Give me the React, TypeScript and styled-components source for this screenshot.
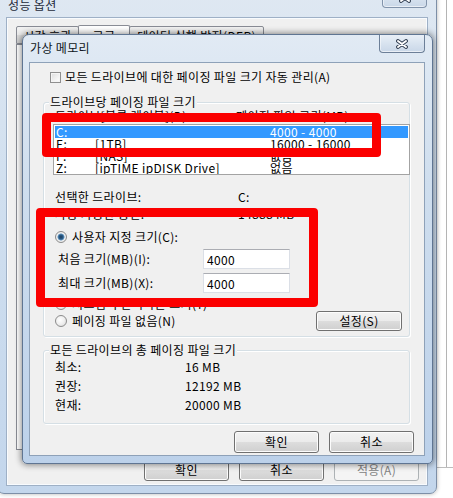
import React from "react";
import styled, { createGlobalStyle } from "styled-components";

const GlobalStyle = createGlobalStyle`
  html, body { margin: 0; padding: 0; background: #ffffff; overflow: hidden; }
  * { box-sizing: border-box; }
`;

const Desktop = styled.div`
  position: relative;
  width: 453px;
  height: 498px;
  overflow: hidden;
  background: #ffffff;
  font-family: "Noto Sans CJK KR", "Noto Sans", sans-serif;
  font-size: 12px;
  line-height: 14px;
  letter-spacing: 0.35px;
  color: #000;
`;

const BackdropV = styled.div`
  position: absolute;
  left: 446px;
  top: 0;
  width: 1px;
  height: 467px;
  background: #b4b4b4;
`;

const BackdropH = styled.div`
  position: absolute;
  left: 430px;
  top: 467px;
  width: 23px;
  height: 1px;
  background: #bdbdbd;
`;

/* ---------- window chrome ---------- */

const OuterWindow = styled.div`
  position: absolute;
  z-index: 0;
  left: -3px;
  top: -12px;
  width: 440px;
  height: 506px;
  display: flex;
  flex-direction: column;
  padding: 0 9px 8px 9px;
  border: 1px solid #7d8fa7;
  border-radius: 7px;
  background: linear-gradient(to bottom, #dfe8f2 0%, #d0dfef 40%, #c3d6ec 100%);
  box-shadow: 0 0 4px rgba(0, 0, 0, 0.3);
`;

const OuterTitleBar = styled.div`
  height: 29px;
  display: flex;
  justify-content: space-between;
  align-items: flex-start;
`;

const OuterTitle = styled.div`
  padding-top: 9px;
  padding-left: 1px;
  color: #1e2a3a;
`;

const CloseButton = styled.div<{ $w: number; $h: number; $faded?: boolean }>`
  width: ${(p) => p.$w}px;
  height: ${(p) => p.$h}px;
  display: flex;
  align-items: center;
  justify-content: center;
  border: 1px solid ${(p) => (p.$faded ? "#8193ab" : "#6c7f98")};
  border-top: none;
  border-radius: 0 0 4px 4px;
  background: linear-gradient(to bottom, #e9eff7 0%, #d8e3ef 50%, #c9d7e8 100%);
  box-shadow: inset 0 -1px 0 rgba(255, 255, 255, 0.6), inset 1px 0 0 rgba(255, 255, 255, 0.5);
`;

const CloseGlyph = () => (
  <svg width="12" height="10" viewBox="0 0 12 10">
    <path d="M2 2 L10 8 M10 2 L2 8" stroke="#2f3c50" strokeWidth="3.8" strokeLinecap="round" fill="none" />
    <path d="M2 2 L10 8 M10 2 L2 8" stroke="#ffffff" strokeWidth="2" strokeLinecap="round" fill="none" />
  </svg>
);

const OuterClient = styled.div`
  flex: 1;
  display: flex;
  flex-direction: column;
  padding: 5px 7px 3px 8px;
  background: #f0f0f0;
  border: 1px solid #f8fbfe;
  box-shadow: 0 0 0 1px #9eb0c6;
`;

const TabStrip = styled.div`
  height: 20px;
  display: flex;
  align-items: flex-end;
  padding-left: 1px;
  position: relative;
  z-index: 1;
`;

const Tab = styled.div<{ $w: number; $active?: boolean }>`
  width: ${(p) => p.$w}px;
  height: ${(p) => (p.$active ? 20 : 18)}px;
  margin-bottom: ${(p) => (p.$active ? -1 : 0)}px;
  padding-top: ${(p) => (p.$active ? 3 : 2)}px;
  text-align: center;
  border: 1px solid #898c95;
  border-bottom: ${(p) => (p.$active ? "none" : "1px solid #898c95")};
  border-radius: 2px 2px 0 0;
  background: ${(p) =>
    p.$active ? "#ffffff" : "linear-gradient(to bottom, #f2f2f2 0%, #ebebeb 50%, #dddddd 51%, #cfcfcf 100%)"};
  margin-left: -1px;
`;

const TabPanel = styled.div`
  flex: 1;
  background: #ffffff;
  border: 1px solid #898c95;
`;

const OuterButtonRow = styled.div`
  display: flex;
  justify-content: flex-end;
  gap: 10px;
  margin-top: 9px;
`;

const InnerWindow = styled.div`
  position: absolute;
  z-index: 1;
  left: 22px;
  top: 34px;
  width: 411px;
  height: 430px;
  display: flex;
  flex-direction: column;
  padding: 0 7px 7px 6px;
  border: 1px solid #5f7592;
  border-radius: 7px 7px 5px 5px;
  background: linear-gradient(to bottom, #e1eaf4 0%, #cfdeee 35%, #bcd1ea 100%);
  box-shadow: 0 0 6px 1px rgba(0, 0, 0, 0.45);
`;

const InnerTitleBar = styled.div`
  height: 27px;
  display: flex;
  justify-content: space-between;
  align-items: flex-start;
`;

const InnerTitle = styled.div`
  padding-top: 6px;
  padding-left: 1px;
  color: #0d1520;
`;

const InnerClient = styled.div`
  flex: 1;
  display: flex;
  flex-direction: column;
  padding: 7px 10px 0 13px;
  background: #f0f0f0;
  border: 1px solid #8ea1b8;
`;

/* ---------- controls ---------- */

const CheckRow = styled.div`
  height: 14px;
  display: flex;
  align-items: center;
  gap: 4px;
  margin-left: 7px;
`;

const CheckBox = styled.span`
  width: 11px;
  height: 11px;
  border: 1px solid #8f8f8f;
  background: linear-gradient(135deg, #dcdcdc 0%, #f2f2f2 60%, #ffffff 100%);
  box-shadow: inset 0 0 0 1px #f4f4f4;
`;

const GroupBox = styled.div<{ $mt: number; $pb: number }>`
  margin-top: ${(p) => p.$mt}px;
  margin-right: 4px;
  display: flex;
  flex-direction: column;
  padding: 0 7px ${(p) => p.$pb}px 11px;
  border: 1px solid #d5dfe5;
  border-radius: 3px;
  box-shadow: inset 1px 1px 0 #ffffff, 1px 1px 0 #ffffff;
`;

const GroupLabel = styled.div`
  align-self: flex-start;
  margin-top: -8px;
  margin-left: -6px;
  padding: 0 1px;
  height: 14px;
  background: #f0f0f0;
`;

const ListHeader = styled.div`
  height: 14px;
  display: grid;
  grid-template-columns: 181px 1fr;
`;

const ListBox = styled.div`
  margin: 1px -8px 0 -2px;
  height: 51px;
  padding: 1px;
  border: 1px solid #a3a3a3;
  background: #ffffff;
  overflow: hidden;
`;

const ListRow = styled.div<{ $selected?: boolean }>`
  height: 12px;
  line-height: 12px;
  display: grid;
  grid-template-columns: 39px 175px 1fr;
  padding-left: 1px;
  background: ${(p) => (p.$selected ? "#3399ff" : "transparent")};
  color: ${(p) => (p.$selected ? "#ffffff" : "#000000")};
  white-space: nowrap;
`;

const InfoBlock = styled.div`
  margin-top: 13px;
`;

const InfoRow = styled.div<{ $h: number; $col: number }>`
  height: ${(p) => p.$h}px;
  display: grid;
  grid-template-columns: ${(p) => p.$col}px 1fr;
  align-items: center;
`;

const RadioRow = styled.div<{ $mt: number }>`
  height: 15px;
  margin-top: ${(p) => p.$mt}px;
  display: flex;
  align-items: center;
  gap: 5px;
`;

const Radio = styled.span<{ $checked?: boolean }>`
  width: 12px;
  height: 12px;
  border-radius: 50%;
  border: 1px solid #8c8c8c;
  background: ${(p) =>
    p.$checked
      ? "radial-gradient(circle at 50% 50%, #1d3c5c 0%, #2a5d8a 30%, #6c9cc4 45%, #f2f2f2 55%, #dcdcdc 100%)"
      : "radial-gradient(circle at 40% 40%, #ffffff 0%, #efefef 50%, #d6d6d6 100%)"};
`;

const FieldRow = styled.div<{ $mt: number }>`
  margin-top: ${(p) => p.$mt}px;
  margin-left: 3px;
  height: 20px;
  display: grid;
  grid-template-columns: 145px 87px;
  align-items: center;
`;

const TextField = styled.input`
  width: 87px;
  height: 20px;
  padding: 0 3px;
  border: 1px solid #dbdfe6;
  border-top-color: #abadb3;
  background: #ffffff;
  font: inherit;
  letter-spacing: inherit;
  color: #000;
  outline: none;
`;

const LastRow = styled.div`
  height: 20px;
  display: flex;
  align-items: center;
  justify-content: space-between;
`;

const Button = styled.button<{ $w?: number; $h?: number; $disabled?: boolean }>`
  width: ${(p) => p.$w ?? 85}px;
  height: ${(p) => p.$h ?? 22}px;
  padding: 0;
  border: 1px solid ${(p) => (p.$disabled ? "#adb2b5" : "#707070")};
  border-radius: 3px;
  background: ${(p) =>
    p.$disabled
      ? "#f4f4f4"
      : "linear-gradient(to bottom, #f2f2f2 0%, #ebebeb 50%, #dddddd 51%, #cfcfcf 100%)"};
  box-shadow: inset 0 0 0 1px ${(p) => (p.$disabled ? "#f4f4f4" : "#fcfcfc")};
  font: inherit;
  letter-spacing: inherit;
  line-height: 14px;
  color: ${(p) => (p.$disabled ? "#838383" : "#000")};
`;

const DialogButtons = styled.div`
  margin-top: 7px;
  display: flex;
  justify-content: flex-end;
  gap: 10px;
`;

const Annotation = styled.div<{ $x: number; $y: number; $w: number; $h: number }>`
  position: absolute;
  z-index: 2;
  left: ${(p) => p.$x}px;
  top: ${(p) => p.$y}px;
  width: ${(p) => p.$w}px;
  height: ${(p) => p.$h}px;
  border: 9px solid #fb0000;
  border-radius: 4px;
`;

const drives = [
  { letter: "C:", label: "", size: "4000 - 4000", selected: true },
  { letter: "E:", label: "[1TB]", size: "16000 - 16000" },
  { letter: "F:", label: "[NAS]", size: "없음" },
  { letter: "Z:", label: "[ipTIME ipDISK Drive]", size: "없음" },
];

const totals = [
  { k: "최소:", v: "16 MB" },
  { k: "권장:", v: "12192 MB" },
  { k: "현재:", v: "20000 MB" },
];

export default function App() {
  return (
    <Desktop>
      <GlobalStyle />
      <BackdropV />
      <BackdropH />

      <OuterWindow>
        <OuterTitleBar>
          <OuterTitle>성능 옵션</OuterTitle>
          <CloseButton $w={45} $h={19} $faded>
            <CloseGlyph />
          </CloseButton>
        </OuterTitleBar>
        <OuterClient>
          <TabStrip>
            <Tab $w={63}>시각 효과</Tab>
            <Tab $w={52} $active>
              고급
            </Tab>
            <Tab $w={135}>데이터 실행 방지(DEP)</Tab>
          </TabStrip>
          <TabPanel />
          <OuterButtonRow>
            <Button>확인</Button>
            <Button>취소</Button>
            <Button $disabled>적용(A)</Button>
          </OuterButtonRow>
        </OuterClient>
      </OuterWindow>

      <InnerWindow>
        <InnerTitleBar>
          <InnerTitle>가상 메모리</InnerTitle>
          <CloseButton $w={46} $h={18}>
            <CloseGlyph />
          </CloseButton>
        </InnerTitleBar>
        <InnerClient>
          <CheckRow>
            <CheckBox />
            <span>모든 드라이브에 대한 페이징 파일 크기 자동 관리(A)</span>
          </CheckRow>

          <GroupBox $mt={18} $pb={5}>
            <GroupLabel>드라이브당 페이징 파일 크기</GroupLabel>
            <ListHeader>
              <span>드라이브[볼륨 레이블](D)</span>
              <span>페이징 파일 크기(MB)</span>
            </ListHeader>
            <ListBox>
              {drives.map((d) => (
                <ListRow key={d.letter} $selected={d.selected}>
                  <span>{d.letter}</span>
                  <span>{d.label}</span>
                  <span>{d.size}</span>
                </ListRow>
              ))}
            </ListBox>
            <InfoBlock>
              <InfoRow $h={17} $col={183}>
                <span>선택한 드라이브:</span>
                <span>C:</span>
              </InfoRow>
              <InfoRow $h={17} $col={183}>
                <span>사용 가능한 공간:</span>
                <span>14888 MB</span>
              </InfoRow>
            </InfoBlock>
            <RadioRow $mt={7}>
              <Radio $checked />
              <span>사용자 지정 크기(C):</span>
            </RadioRow>
            <FieldRow $mt={5}>
              <span>처음 크기(MB)(I):</span>
              <TextField readOnly value="4000" />
            </FieldRow>
            <FieldRow $mt={4}>
              <span>최대 크기(MB)(X):</span>
              <TextField readOnly value="4000" />
            </FieldRow>
            <RadioRow $mt={3}>
              <Radio />
              <span>시스템이 관리하는 크기(Y)</span>
            </RadioRow>
            <LastRow>
              <RadioRow $mt={0}>
                <Radio />
                <span>페이징 파일 없음(N)</span>
              </RadioRow>
              <Button $w={86} $h={20}>
                설정(S)
              </Button>
            </LastRow>
          </GroupBox>

          <GroupBox $mt={13} $pb={9}>
            <GroupLabel>모든 드라이브의 총 페이징 파일 크기</GroupLabel>
            {totals.map((t) => (
              <InfoRow key={t.k} $h={19} $col={130}>
                <span>{t.k}</span>
                <span>{t.v}</span>
              </InfoRow>
            ))}
          </GroupBox>

          <DialogButtons>
            <Button>확인</Button>
            <Button>취소</Button>
          </DialogButtons>
        </InnerClient>
      </InnerWindow>

      <Annotation $x={42} $y={113} $w={339} $h={44} />
      <Annotation $x={36} $y={208} $w={282} $h={99} />
    </Desktop>
  );
}
